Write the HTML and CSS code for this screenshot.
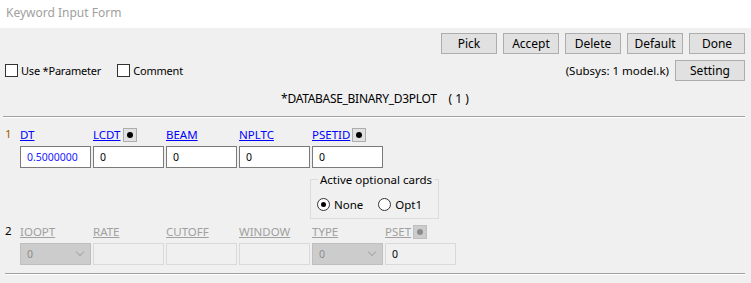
FILE: index.html
```html
<!DOCTYPE html>
<html lang="en">
<head>
  <meta charset="UTF-8" />
  <title>Keyword Input Form</title>
  <link rel="stylesheet" href="styles.css">
</head>
<body>
  <div class="titlebar">Keyword Input Form</div>

  <div class="toolbar">
    <button class="btn">Pick</button>
    <button class="btn">Accept</button>
    <button class="btn">Delete</button>
    <button class="btn">Default</button>
    <button class="btn">Done</button>
  </div>

  <div class="options">
    <label class="check"><span class="box"></span>Use *Parameter</label>
    <label class="check"><span class="box"></span>Comment</label>
    <span class="subsys">(Subsys: 1 model.k)</span>
    <button class="btn btn-setting">Setting</button>
  </div>

  <div class="heading">*DATABASE_BINARY_D3PLOT<span class="count">( 1 )</span></div>
  <div class="rule"></div>

  <!-- card 1 -->
  <div class="card">
    <div class="card-no">1</div>
    <div class="fields">
      <div class="field">
        <div class="label"><a>DT</a></div>
        <div class="input blue">0.5000000</div>
      </div>
      <div class="field">
        <div class="label"><a>LCDT</a><span class="pick"></span></div>
        <div class="input">0</div>
      </div>
      <div class="field">
        <div class="label"><a>BEAM</a></div>
        <div class="input">0</div>
      </div>
      <div class="field">
        <div class="label"><a>NPLTC</a></div>
        <div class="input">0</div>
      </div>
      <div class="field">
        <div class="label"><a>PSETID</a><span class="pick"></span></div>
        <div class="input">0</div>
      </div>
    </div>
  </div>

  <div class="optional">
    <fieldset class="group">
      <legend>Active optional cards</legend>
      <label class="radio"><span class="dot on"></span>None</label>
      <label class="radio"><span class="dot"></span>Opt1</label>
    </fieldset>
  </div>

  <!-- card 2 (disabled) -->
  <div class="card card-off">
    <div class="card-no">2</div>
    <div class="fields">
      <div class="field">
        <div class="label"><a>IOOPT</a></div>
        <div class="select">0<span class="chev"></span></div>
      </div>
      <div class="field">
        <div class="label"><a>RATE</a></div>
        <div class="input"></div>
      </div>
      <div class="field">
        <div class="label"><a>CUTOFF</a></div>
        <div class="input"></div>
      </div>
      <div class="field">
        <div class="label"><a>WINDOW</a></div>
        <div class="input"></div>
      </div>
      <div class="field">
        <div class="label"><a>TYPE</a></div>
        <div class="select">0<span class="chev"></span></div>
      </div>
      <div class="field">
        <div class="label"><a>PSET</a><span class="pick"></span></div>
        <div class="input plain">0</div>
      </div>
    </div>
  </div>
  <div class="rule rule-bottom"></div>
</body>
</html>
```

FILE: styles.css
```css
body {
  margin: 0;
  width: 751px;
  height: 283px;
  overflow: hidden;
  background: #f0f0f0;
  font-family: "Noto Sans", "Open Sans", sans-serif;
  font-size: 11.5px;
  color: #000;
}

.titlebar {
  height: 28px;
  line-height: 26px;
  padding-left: 6px;
  background: #fff;
  color: #a0a0a0;
  font-size: 12px;
}

/* buttons */
.toolbar {
  display: flex;
  justify-content: flex-end;
  gap: 6px;
  padding: 5px 6px 0 0;
}

.btn {
  width: 56px;
  height: 21px;
  padding: 0;
  border: 1px solid #adadad;
  background: #e1e1e1;
  font-family: inherit;
  font-size: 12px;
  color: #000;
}

.options {
  display: flex;
  align-items: center;
  height: 21px;
  margin-top: 6px;
  padding: 0 6px 0 5px;
}

.check {
  display: flex;
  align-items: center;
  margin-right: 16px;
  font-size: 11px;
  letter-spacing: -0.2px;
}

.box {
  width: 11px;
  height: 11px;
  border: 1px solid #333;
  background: #fff;
  margin-right: 3px;
}

.subsys {
  margin-left: auto;
  margin-right: 6px;
}

.btn-setting {
  width: 70px;
}

.heading {
  text-align: center;
  margin-top: 8px;
  height: 20px;
  line-height: 20px;
  padding-right: 1px;
  font-size: 12px;
  letter-spacing: -0.3px;
}

.count {
  margin-left: 12px;
  letter-spacing: 0;
}

.rule {
  height: 1px;
  margin: 7px 6px 0 3px;
  background: #a0a0a0;
  border-bottom: 1px solid #fff;
}

/* cards */
.card {
  display: flex;
  margin-top: 9px;
}

.card-no {
  width: 20px;
  padding-left: 5px;
  box-sizing: border-box;
  color: #a06000;
  line-height: 14px;
}

.fields {
  display: flex;
  gap: 2px;
}

.field {
  width: 71px;
}

.label {
  display: flex;
  align-items: center;
  height: 15px;
  margin-bottom: 4px;
}

.label a {
  color: #0000ff;
  text-decoration: underline;
  line-height: 14px;
}

.pick {
  position: relative;
  width: 12px;
  height: 12px;
  margin-left: 2px;
  border: 1px solid #adadad;
  background: #e1e1e1;
}

.pick::after {
  content: "";
  position: absolute;
  left: 3px;
  top: 3px;
  width: 6px;
  height: 6px;
  border-radius: 50%;
  background: #000;
}

.input {
  height: 20px;
  line-height: 20px;
  padding-left: 6px;
  border: 1px solid #7a7a7a;
  background: #fff;
  width: 63px;
  font-size: 10.5px;
}

.input.blue {
  color: #2020ff;
}

/* optional cards group */
.optional {
  padding-left: 310px;
  margin-top: 4px;
}

.group {
  margin: 0;
  padding: 3px 0 0 6px;
  border: 1px solid #dcdcdc;
  display: flex;
  align-items: center;
  box-sizing: border-box;
  width: 129px;
  height: 47px;
}

.group legend {
  padding: 0 2px;
  margin-left: 1px;
}

.radio {
  display: flex;
  align-items: center;
  margin-right: 15px;
}

.dot {
  position: relative;
  width: 11px;
  height: 11px;
  border: 1px solid #333;
  border-radius: 50%;
  background: #fff;
  margin-right: 4px;
}

.dot.on::after {
  content: "";
  position: absolute;
  left: 3px;
  top: 3px;
  width: 5px;
  height: 5px;
  border-radius: 50%;
  background: #000;
}

/* disabled card */
.card-off {
  margin-top: 5px;
}

.card-off .card-no {
  color: #000;
}

.card-off .label a {
  color: #a0a0a0;
}

.card-off .pick {
  border-color: #bfbfbf;
  background: #cccccc;
}

.card-off .pick::after {
  background: #8c8c8c;
}

.card-off .input {
  border: 1px solid #d9d9d9;
  background: #f0f0f0;
}

.card-off .input.plain {
  color: #000;
}

.select {
  position: relative;
  height: 20px;
  line-height: 20px;
  padding-left: 6px;
  border: 1px solid #bfbfbf;
  background: #cccccc;
  color: #8c8c8c;
  width: 63px;
  font-size: 10.5px;
}

.chev {
  position: absolute;
  right: 7px;
  top: 5px;
  width: 5px;
  height: 5px;
  border-right: 1px solid #a8a8a8;
  border-bottom: 1px solid #a8a8a8;
  transform: rotate(45deg);
}

.rule-bottom {
  margin: 8px 6px 0 5px;
}
```
